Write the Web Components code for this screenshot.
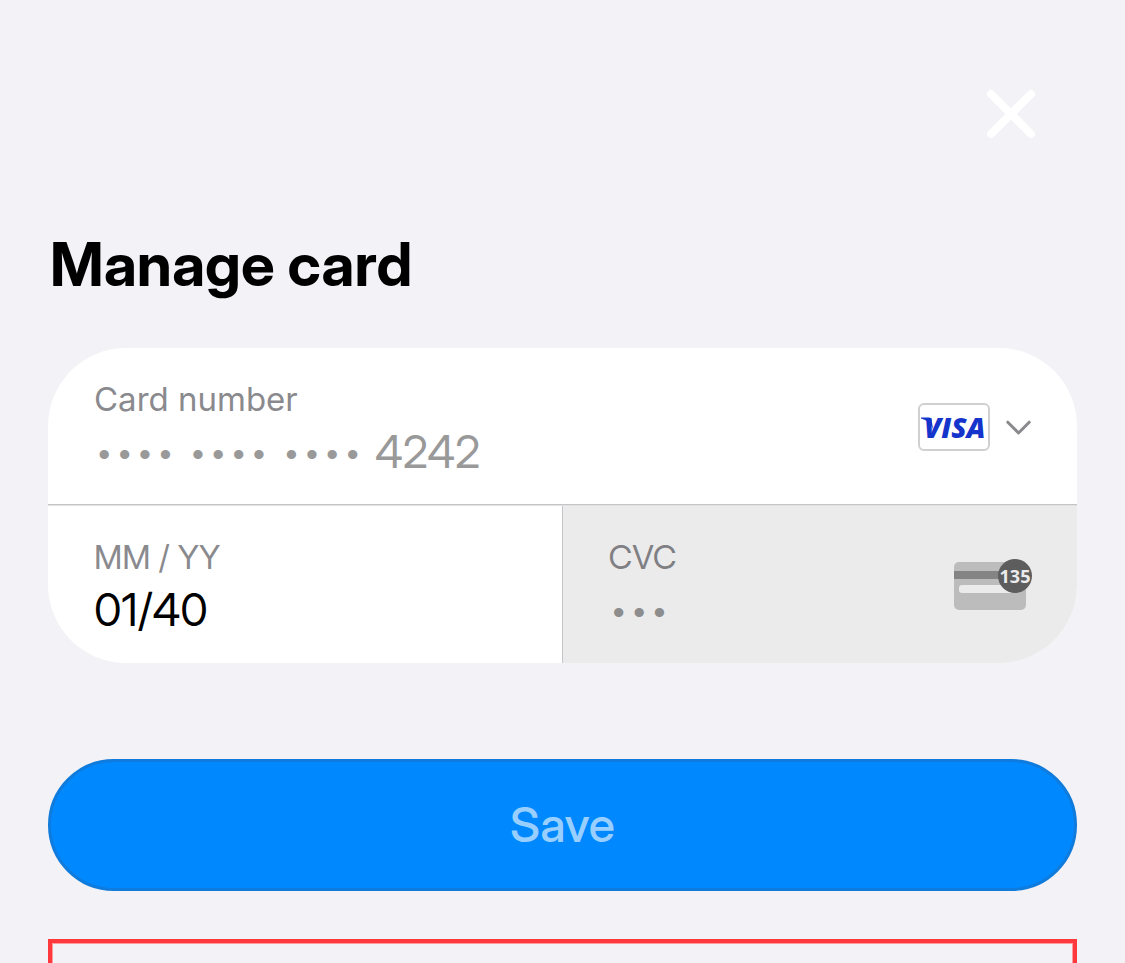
<!DOCTYPE html>
<html lang="en">
<head>
<meta charset="utf-8">
<meta name="viewport" content="width=device-width, initial-scale=1">
<title>Manage card</title>
<style>
  body { margin: 0; background: #f2f2f7; color: #000; font-family: "Inter Display", Inter, "Liberation Sans", sans-serif; }
</style>
</head>
<body>
<manage-card-page>
  <close-button slot="close"></close-button>
  <span slot="title">Manage card</span>
  <card-form>
    <card-field slot="number" label="Card number" hidden-groups="3" value="4242" disabled>
      <brand-picker></brand-picker>
    </card-field>
    <card-field slot="expiry" label="MM / YY" value="01/40"></card-field>
    <card-field slot="cvc" label="CVC" value="•••" disabled muted>
      <cvc-icon></cvc-icon>
    </card-field>
  </card-form>
  <save-button>Save</save-button>
  <danger-frame></danger-frame>
</manage-card-page>

<script>
class BaseElement extends HTMLElement {
  constructor() {
    super();
    this.attachShadow({ mode: 'open' });
  }
  connectedCallback() {
    if (!this.shadowRoot.firstChild) this.shadowRoot.innerHTML = this.render();
  }
}

customElements.define('manage-card-page', class extends BaseElement {
  render() {
    return `<style>
      :host { display: block; }
      main { box-sizing: border-box; min-height: 100vh; padding: 84px 48px 0; display: flex; flex-direction: column; }
      header { display: flex; justify-content: flex-end; padding-right: 36px; }
      h1 { margin: 84px 2px 48px; font-size: 60px; line-height: 72px; font-weight: 700; }
      ::slotted(save-button) { margin-top: 96px; }
      ::slotted(danger-frame) { margin-top: 48px; flex: 1; }
    </style>
    <main>
      <header><slot name="close"></slot></header>
      <h1><slot name="title"></slot></h1>
      <slot></slot>
    </main>`;
  }
});

customElements.define('close-button', class extends BaseElement {
  render() {
    return `<style>
      :host { display: block; }
      button { display: block; width: 60px; height: 60px; padding: 0; border: 0; background: none; }
      svg { display: block; }
    </style>
    <button type="button" aria-label="Close">
      <svg width="60" height="60" viewBox="0 0 60 60" fill="none" stroke="#fff" stroke-width="8" stroke-linecap="round"><path d="M10 10 50 50M50 10 10 50"/></svg>
    </button>`;
  }
});

customElements.define('card-form', class extends BaseElement {
  render() {
    return `<style>
      :host { display: block; }
      form { background: #fff; border-radius: 78px; overflow: hidden; }
      .top { border-bottom: 1px solid #c5c5c7; --label-font: Inter; }
      .bottom { display: grid; grid-template-columns: 1fr 1fr; grid-auto-rows: minmax(157px, auto); border-top: 1px solid #e1e1e3; }
      .bottom > div { display: grid; }
      .expiry { border-right: 1px solid #c5c5c7; }
    </style>
    <form>
      <div class="top"><slot name="number"></slot></div>
      <div class="bottom">
        <div class="expiry"><slot name="expiry"></slot></div>
        <div><slot name="cvc"></slot></div>
      </div>
    </form>`;
  }
});

customElements.define('card-field', class extends BaseElement {
  render() {
    const value = this.getAttribute('value');
    const disabled = this.hasAttribute('disabled') ? 'disabled' : '';
    const groups = '<span class="dots">••••</span>'.repeat(Number(this.getAttribute('hidden-groups')));
    const dots = value.startsWith('•') ? 'class="dots"' : '';
    return `<style>
      :host { display: flex; align-items: center; padding: 0 45px 0 46px; }
      :host([muted]) { background: #ebebeb; }
      .text { flex: 1; min-width: 0; align-self: flex-start; display: flex; flex-direction: column; gap: 3px; padding: 31px 0 22px; }
      label { font-family: var(--label-font, "Inter Display"), Inter, "Liberation Sans", sans-serif; font-size: 33px; line-height: 40px; color: #8a8a8e; }
      :host([muted]) label { color: #808084; }
      .value { display: flex; align-items: flex-end; gap: 12px; height: 60px; color: #999; }
      input { box-sizing: border-box; flex: 1; min-width: 0; width: 100%; height: 60px; margin: 0; padding: 0; border: 0; outline: 0; background: none; font: 400 45px/60px "Inter Display", Inter, "Liberation Sans", sans-serif; color: #000; }
      .dots { height: 50px; font: 400 34px/50px "Liberation Mono", monospace; }
      input:disabled { color: #999; }
      :host([muted]) input:disabled { color: #8d8d8d; }
    </style>
    <div class="text">
      <label for="field">${this.getAttribute('label')}</label>
      <div class="value">${groups}<input id="field" type="text" value="${value}" ${dots} ${disabled}></div>
    </div>
    <slot></slot>`;
  }
});

customElements.define('brand-picker', class extends BaseElement {
  render() {
    return `<style>
      :host { display: block; padding-top: 2px; }
      label { position: relative; display: flex; align-items: center; gap: 15px; }
      select { appearance: none; box-sizing: border-box; width: 72px; height: 48px; margin: 0; padding: 0 0 0 4px; border: 2px solid #d0d0d0; border-radius: 6px; background: #fff; color: #1434cb; font: italic 800 28px/44px "Open Sans", "Noto Sans", sans-serif; }
      svg { display: block; }
      .flick { position: absolute; left: 3px; top: 14px; }
    </style>
    <label>
      <select aria-label="Card brand"><option>VISA</option></select>
      <svg class="flick" width="14" height="12" viewBox="0 0 14 12" fill="#1434cb"><path d="M0 1.5V.5H8Q10 .5 10.5 2L12 12Q9 4 0 1.5Z"/></svg>
      <svg width="27" height="18" viewBox="0 0 27 18" fill="none" stroke="#8a8a8e" stroke-width="3" stroke-linecap="round" stroke-linejoin="round"><path d="M2.8 4.2 13.5 15 24.2 4.2"/></svg>
    </label>`;
  }
});

customElements.define('cvc-icon', class extends BaseElement {
  render() {
    return `<style>
      :host { display: block; }
      svg { display: block; }
      text { font: 700 18px "Open Sans", sans-serif; }
    </style>
    <svg width="78" height="54" viewBox="0 0 78 54" role="img" aria-label="Security code on card">
      <rect y="4" width="72" height="48" rx="5" fill="#bcbcbc"/>
      <path d="M0 13H72V21H0Z" fill="#848484"/>
      <rect x="5" y="27" width="58" height="8" rx="3" fill="#ebebeb"/>
      <circle cx="61" cy="18" r="17" fill="#5d5d5d"/>
      <text x="61" y="25" text-anchor="middle" fill="#ebebeb">135</text>
    </svg>`;
  }
});

customElements.define('save-button', class extends BaseElement {
  render() {
    return `<style>
      :host { display: block; }
      button { box-sizing: border-box; display: block; width: 100%; height: 132px; padding: 0; border: 3px solid #0f7bdc; border-radius: 66px; background: #08f; color: #99cfff; font: 500 48px/60px "Inter Display", Inter, "Liberation Sans", sans-serif; }
    </style>
    <button type="button" disabled><slot></slot></button>`;
  }
});

customElements.define('danger-frame', class extends BaseElement {
  render() {
    return `<style>
      :host { display: block; box-sizing: border-box; border: 4px solid #ff383c; border-bottom: 0; box-shadow: inset 1px 1px #ff9c9f, inset -1px 0 #ff9c9f; }
    </style>`;
  }
});
</script>
</body>
</html>
